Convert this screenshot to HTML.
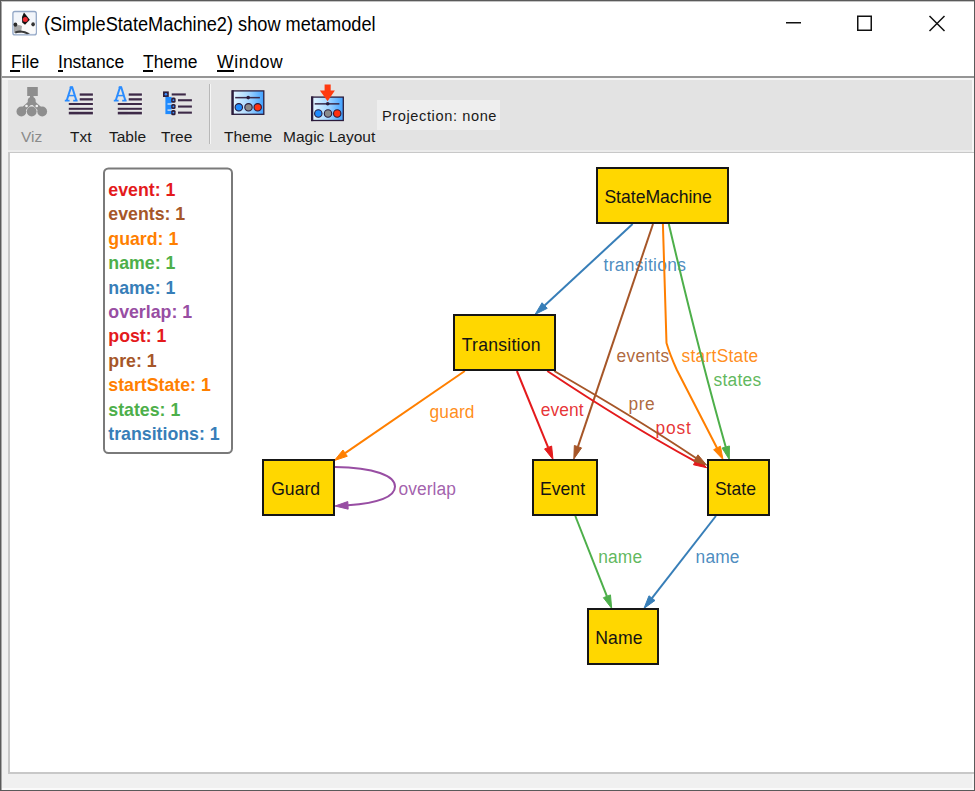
<!DOCTYPE html>
<html><head><meta charset="utf-8">
<style>
*{margin:0;padding:0;box-sizing:border-box}
html,body{width:975px;height:791px;overflow:hidden;background:#fff}
body{position:relative;font-family:"Liberation Sans",sans-serif;color:#000}
.a{position:absolute;white-space:nowrap}
#win{position:absolute;left:0;top:0;width:975px;height:791px;border:1px solid #5a5a5a;background:#fff}
.menu{font-size:17.5px;top:51px;line-height:22px}
.menu u{text-decoration:none}
.tl{font-size:15.5px;top:127px;line-height:20px;color:#1a1a1a}
</style></head><body>
<div id="win"></div>
<!-- title bar -->
<svg class="a" style="left:11px;top:10px" width="28" height="28" viewBox="11 10 28 28">
  <rect x="12.9" y="11.5" width="23.4" height="23.4" rx="2" fill="#f2f5fa" stroke="#93a7c6" stroke-width="1.3"/>
  <path d="M14 24 Q16 21 21 22 L29 22 Q33 22 35.5 24 L35.5 33 L14 33 Z" fill="#fafafa"/>
  <path d="M14 26 Q18 24 22 26 L21 33 L14 33 Z" fill="#a8a8a8"/>
  <path d="M15 31.5 Q22 28.5 30 33.5 L27 34.2 Q21 31 15.5 33.5 Z" fill="#3a3a3a"/>
  <path d="M24 12.6 L29.8 19.8 L25 24.8 L22.2 22.5 L22 17 Z" fill="#121212"/>
  <circle cx="25.3" cy="19.4" r="2.5" fill="#ee2a32"/>
  <ellipse cx="15.4" cy="24.6" rx="1.9" ry="2.2" fill="#2a2a2a"/>
  <ellipse cx="33.1" cy="24.3" rx="1.8" ry="2.1" fill="#333"/>
</svg>
<div class="a" style="left:44px;top:13px;font-size:18.2px;line-height:22px;transform:scaleY(1.08);transform-origin:0 0">(SimpleStateMachine2) show metamodel</div>
<svg class="a" style="left:780px;top:8px" width="180" height="32">
  <rect x="6" y="14" width="15" height="1.5" fill="#111"/>
  <rect x="77.75" y="8.25" width="13.5" height="14" fill="none" stroke="#111" stroke-width="1.5"/>
  <path d="M149.5 8 L164.5 23 M164.5 8 L149.5 23" stroke="#111" stroke-width="1.5"/>
</svg>
<!-- menu bar -->
<div class="a menu" style="left:11px"><u>F</u>ile</div>
<div class="a menu" style="left:58px"><u>I</u>nstance</div>
<div class="a menu" style="left:143px"><u>T</u>heme</div>
<div class="a menu" style="left:217px;letter-spacing:0.7px"><u>W</u>indow</div>
<div class="a" style="left:10px;top:70px;width:10px;height:2px;background:#000"></div>
<div class="a" style="left:58px;top:70px;width:5px;height:2px;background:#000"></div>
<div class="a" style="left:143px;top:70px;width:10px;height:2px;background:#000"></div>
<div class="a" style="left:217px;top:70px;width:17px;height:2px;background:#000"></div>
<div class="a" style="left:1px;top:76px;width:973px;height:2px;background:#959595"></div>
<div class="a" style="left:1px;top:78px;width:973px;height:2px;background:#f7f7f7"></div>
<!-- toolbar -->
<div class="a" style="left:1px;top:80px;width:973px;height:709px;background:#f0f0f0"></div>
<div class="a" style="left:8px;top:80px;width:964px;height:70px;background:#e3e3e3"></div>
<div class="a" style="left:8px;top:150px;width:964px;height:2px;background:#ececec"></div>
<!-- canvas -->
<div class="a" style="left:972px;top:80px;width:2px;height:709px;background:#f6f6f6"></div>
<div class="a" style="left:8px;top:152px;width:966px;height:622px;background:#c8c8c8"></div>
<div class="a" style="left:10px;top:153px;width:964px;height:619px;background:#fff"></div>
<div class="a" style="left:1px;top:788px;width:973px;height:2px;background:#fafafa"></div>


<svg class="a" style="left:8px;top:80px" width="200" height="45" viewBox="8 80 200 45">
  <!-- Viz -->
  <g fill="#8e8e8e">
    <rect x="27.2" y="87" width="10.6" height="9"/>
    <rect x="30" y="95" width="3.5" height="4"/>
    <circle cx="31.7" cy="101" r="4"/>
    <path d="M29 101 L19 110 L24 112 L31.7 104 L39.5 112 L44.5 110 L34.5 101 Z"/>
    <circle cx="21.4" cy="111.5" r="4.9"/>
    <circle cx="31.7" cy="111.5" r="4.9"/>
    <circle cx="42.2" cy="111.5" r="4.9"/>
  </g>
  <circle cx="26.5" cy="106" r="1.3" fill="#f2f2f2"/>
  <circle cx="36.8" cy="106" r="1.3" fill="#f2f2f2"/>
  <!-- Txt -->
  <g id="txtic">
    <rect x="78.5" y="92" width="15.5" height="24" fill="#efefef" opacity="0.35"/>
    <g fill="none" stroke="#2a8cff">
      <path d="M66.8 100.3 L71 87.2 L72.2 87.2 L76.3 100.3" stroke-width="2"/>
      <path d="M68.6 95.6 L74.6 95.6" stroke-width="1.5"/>
      <path d="M64.8 100.6 L69.6 100.6 M73.2 100.6 L77.6 100.6" stroke-width="1.6"/>
      <path d="M69.6 87.3 L72.3 87.3" stroke-width="1.4"/>
    </g>
    <g fill="#3e2a48">
      <rect x="79.7" y="93.4" width="13.2" height="2.3"/>
      <rect x="79.7" y="98.2" width="13.2" height="2.3"/>
      <rect x="68.8" y="103" width="24.1" height="2"/>
      <rect x="68.8" y="107.8" width="24.1" height="2"/>
      <rect x="68.8" y="111.8" width="24.1" height="2.6"/>
    </g>
  </g>
  <use href="#txtic" x="49" y="0"/>
  <!-- Tree -->
  <rect x="163" y="91.4" width="5.8" height="5.6" fill="#2e1f3a"/>
  <circle cx="165.9" cy="94.2" r="1.3" fill="#3a8cff"/>
  <rect x="171.7" y="93.4" width="14.1" height="2.1" fill="#3e2a48"/>
  <rect x="165.4" y="96.9" width="6.3" height="17.2" fill="#1f8bff"/>
  <rect x="167.5" y="103.4" width="4.5" height="1.2" fill="#e8eef6"/>
  <rect x="167.5" y="109.5" width="4.5" height="1.2" fill="#e8eef6"/>
  <g fill="#2e1f3a">
    <rect x="171.2" y="97.6" width="4.4" height="5.2" rx="1.5"/>
    <rect x="171.2" y="103.9" width="4.4" height="5.2" rx="1.5"/>
    <rect x="171.2" y="110" width="4.4" height="5.2" rx="1.5"/>
  </g>
  <g fill="#3e2a48">
    <rect x="178" y="99.2" width="13.9" height="2.1"/>
    <rect x="178" y="105.5" width="13.9" height="2.1"/>
    <rect x="178" y="111.6" width="13.9" height="2.1"/>
  </g>
  <g fill="#3a8cff">
    <circle cx="173.4" cy="100.2" r="0.9"/><circle cx="173.4" cy="106.5" r="0.9"/><circle cx="173.4" cy="112.6" r="0.9"/>
  </g>
</svg>
<svg class="a" style="left:220px;top:80px" width="140" height="45" viewBox="220 80 140 45">
  <defs>
    <linearGradient id="lb" x1="0" y1="0" x2="1" y2="0">
      <stop offset="0" stop-color="#e6f6ff"/><stop offset="0.5" stop-color="#a8d8ff"/><stop offset="1" stop-color="#3fa0ff"/>
    </linearGradient>
  </defs>
  <!-- Theme -->
  <g id="thic">
    <rect x="232.2" y="90.9" width="31.6" height="23.4" fill="url(#lb)" stroke="#2b1c3c" stroke-width="1.3"/>
    <rect x="231.6" y="90.3" width="2.2" height="24.6" fill="#2b1c3c"/>
    <rect x="235.2" y="96.9" width="24.7" height="1.5" fill="#3a2a4a"/>
    <circle cx="248.2" cy="97.6" r="1.8" fill="#2b1c3c"/>
    <circle cx="238.8" cy="107.3" r="3.7" fill="#1f8bff" stroke="#2b1c3c" stroke-width="1.1"/>
    <circle cx="248.5" cy="107.3" r="3.7" fill="#8a8a8a" stroke="#2b1c3c" stroke-width="1.1"/>
    <circle cx="257.7" cy="107.3" r="3.7" fill="#ff3010" stroke="#2b1c3c" stroke-width="1.1"/>
  </g>
  <use href="#thic" x="79.5" y="6.2"/>
  <path d="M324.6 84.4 L330.7 84.4 L330.7 90.6 L334.9 90.6 L327.6 101.2 L319.9 90.6 L324.6 90.6 Z" fill="#ff3a10"/>
</svg>
<div class="a tl" style="left:21px;color:#8a8a8a">Viz</div>
<div class="a tl" style="left:70px">Txt</div>
<div class="a tl" style="left:109px">Table</div>
<div class="a tl" style="left:161px">Tree</div>
<div class="a" style="left:209px;top:84px;width:1px;height:60px;background:#b8b8b8"></div>
<div class="a" style="left:210px;top:84px;width:1px;height:60px;background:#f6f6f6"></div>
<div class="a tl" style="left:224px">Theme</div>
<div class="a tl" style="left:283px">Magic Layout</div>
<div class="a" style="left:377px;top:100px;width:123px;height:30px;background:#eeeeee"></div>
<div class="a" style="left:382px;top:106px;font-size:14.6px;letter-spacing:0.6px;line-height:20px;color:#1a1a1a">Projection: none</div>

<div class="a" style="left:1px;top:1px;width:1px;height:789px;background:#a8a8a8"></div>
<div class="a" style="left:1px;top:1px;width:973px;height:1px;background:#c4c4c4"></div>
<svg id="g" class="a" style="left:0;top:0" width="975" height="791" font-family="Liberation Sans, sans-serif">
<text x="603.6" y="270.6" font-size="17.4" letter-spacing="0.3" fill="#377eb8" fill-opacity="0.9" transform="translate(0 270.6) scale(1 1.08) translate(0 -270.6)">transitions</text>
<text x="616.6" y="362.5" font-size="17.4" letter-spacing="0.25" fill="#a65628" fill-opacity="0.9" transform="translate(0 362.5) scale(1 1.08) translate(0 -362.5)">events</text>
<text x="681.6" y="362.5" font-size="17.4" letter-spacing="0.25" fill="#ff7f00" fill-opacity="0.9" transform="translate(0 362.5) scale(1 1.08) translate(0 -362.5)">startState</text>
<text x="713.6" y="386.5" font-size="17.4" letter-spacing="0.25" fill="#4daf4a" fill-opacity="0.9" transform="translate(0 386.5) scale(1 1.08) translate(0 -386.5)">states</text>
<text x="429.6" y="417.8" font-size="17.4" letter-spacing="0.1" fill="#ff7f00" fill-opacity="0.9" transform="translate(0 417.8) scale(1 1.08) translate(0 -417.8)">guard</text>
<text x="540.8" y="415.8" font-size="17.4" letter-spacing="0.05" fill="#e41a1c" fill-opacity="0.9" transform="translate(0 415.8) scale(1 1.08) translate(0 -415.8)">event</text>
<text x="628.5" y="410" font-size="17.4" letter-spacing="0.5" fill="#a65628" fill-opacity="0.9" transform="translate(0 410) scale(1 1.08) translate(0 -410)">pre</text>
<text x="655.6" y="434.2" font-size="17.4" letter-spacing="0.8" fill="#e41a1c" fill-opacity="0.9" transform="translate(0 434.2) scale(1 1.08) translate(0 -434.2)">post</text>
<text x="398.4" y="494.8" font-size="17.4" letter-spacing="0.1" fill="#984ea3" fill-opacity="0.9" transform="translate(0 494.8) scale(1 1.08) translate(0 -494.8)">overlap</text>
<text x="598.2" y="563" font-size="17.4" letter-spacing="0.15" fill="#4daf4a" fill-opacity="0.9" transform="translate(0 563) scale(1 1.08) translate(0 -563)">name</text>
<text x="695.6" y="563" font-size="17.4" letter-spacing="0.15" fill="#377eb8" fill-opacity="0.9" transform="translate(0 563) scale(1 1.08) translate(0 -563)">name</text>
<path d="M535.10,314.40 L542.05,302.77 L547.22,308.35 Z" fill="#377eb8" stroke="#377eb8" stroke-width="1" stroke-linejoin="miter"/>
<path d="M632.60,224.00 L544.63,305.56" stroke="#377eb8" stroke-width="2.0" fill="none"/>
<path d="M573.80,459.00 L574.35,445.47 L581.55,447.89 Z" fill="#a65628" stroke="#a65628" stroke-width="1" stroke-linejoin="miter"/>
<path d="M653.00,224.00 L577.95,446.68" stroke="#a65628" stroke-width="2.0" fill="none"/>
<path d="M723.00,459.50 L713.64,449.71 L720.39,446.21 Z" fill="#ff7f00" stroke="#ff7f00" stroke-width="1" stroke-linejoin="miter"/>
<path d="M662.9,224 L666.5,343 Q670,355 676.9,370 L 717.01,447.96" stroke="#ff7f00" stroke-width="2.0" fill="none"/>
<path d="M729.30,459.50 L722.10,448.03 L729.41,445.96 Z" fill="#4daf4a" stroke="#4daf4a" stroke-width="1" stroke-linejoin="miter"/>
<path d="M668.80,224.00 Q699.10,353.00 725.75,446.99" stroke="#4daf4a" stroke-width="2.0" fill="none"/>
<path d="M334.40,460.50 L342.97,450.01 L347.27,456.28 Z" fill="#ff7f00" stroke="#ff7f00" stroke-width="1" stroke-linejoin="miter"/>
<path d="M464.80,371.00 L345.12,453.14" stroke="#ff7f00" stroke-width="2.0" fill="none"/>
<path d="M553.00,459.50 L544.57,448.90 L551.61,446.03 Z" fill="#e41a1c" stroke="#e41a1c" stroke-width="1" stroke-linejoin="miter"/>
<path d="M516.90,371.00 L548.09,447.46" stroke="#e41a1c" stroke-width="2.0" fill="none"/>
<path d="M706.70,467.70 L693.47,464.78 L697.13,458.12 Z" fill="#e41a1c" stroke="#e41a1c" stroke-width="1" stroke-linejoin="miter"/>
<path d="M547.30,371.00 Q626.30,423.60 695.30,461.45" stroke="#e41a1c" stroke-width="2.0" fill="none"/>
<path d="M706.70,465.20 L693.78,461.15 L697.99,454.83 Z" fill="#a65628" stroke="#a65628" stroke-width="1" stroke-linejoin="miter"/>
<path d="M554.20,371.00 Q635.90,418.00 695.88,457.99" stroke="#a65628" stroke-width="2.0" fill="none"/>
<path d="M335.00,506.00 L347.79,501.56 L348.17,509.15 Z" fill="#984ea3" stroke="#984ea3" stroke-width="1" stroke-linejoin="miter"/>
<path d="M335,467 C375,467.5 395,476 395,486.5 C395,497 378,503  347.98,505.35" stroke="#984ea3" stroke-width="2.0" fill="none"/>
<path d="M611.70,608.40 L603.40,597.70 L610.47,594.91 Z" fill="#4daf4a" stroke="#4daf4a" stroke-width="1" stroke-linejoin="miter"/>
<path d="M575.30,516.00 L606.94,596.30" stroke="#4daf4a" stroke-width="2.0" fill="none"/>
<path d="M644.00,608.40 L648.98,595.81 L654.98,600.47 Z" fill="#377eb8" stroke="#377eb8" stroke-width="1" stroke-linejoin="miter"/>
<path d="M715.90,516.00 L651.98,598.14" stroke="#377eb8" stroke-width="2.0" fill="none"/>
<rect x="597" y="168" width="131" height="55" fill="#ffd700" stroke="#161616" stroke-width="2"/>
<text x="604.4" y="203" font-size="17.6" letter-spacing="0" transform="translate(0 203) scale(1 1.08) translate(0 -203)" fill="#141414">StateMachine</text>
<rect x="454" y="315" width="101" height="55" fill="#ffd700" stroke="#161616" stroke-width="2"/>
<text x="461.7" y="350.6" font-size="17.6" letter-spacing="0.25" transform="translate(0 350.6) scale(1 1.08) translate(0 -350.6)" fill="#141414">Transition</text>
<rect x="263" y="460" width="71" height="55" fill="#ffd700" stroke="#161616" stroke-width="2"/>
<text x="271.2" y="495.2" font-size="17.6" letter-spacing="0" transform="translate(0 495.2) scale(1 1.08) translate(0 -495.2)" fill="#141414">Guard</text>
<rect x="533" y="460" width="64" height="55" fill="#ffd700" stroke="#161616" stroke-width="2"/>
<text x="539.9" y="495.2" font-size="17.6" letter-spacing="0.05" transform="translate(0 495.2) scale(1 1.08) translate(0 -495.2)" fill="#141414">Event</text>
<rect x="708" y="460" width="61" height="55" fill="#ffd700" stroke="#161616" stroke-width="2"/>
<text x="714.9" y="494.8" font-size="17.6" letter-spacing="0" transform="translate(0 494.8) scale(1 1.08) translate(0 -494.8)" fill="#141414">State</text>
<rect x="588" y="609" width="70" height="55" fill="#ffd700" stroke="#161616" stroke-width="2"/>
<text x="595.2" y="644" font-size="17.6" letter-spacing="0.15" transform="translate(0 644) scale(1 1.08) translate(0 -644)" fill="#141414">Name</text>
<rect x="104" y="168.5" width="128" height="284.5" rx="4.5" fill="#fff" stroke="#7a7a7a" stroke-width="2"/>
<text x="108.3" y="195.90" font-size="17.75" font-weight="bold" fill="#e41a1c" transform="translate(0 195.90) scale(1 1.05) translate(0 -195.90)">event: 1</text>
<text x="108.3" y="220.32" font-size="17.75" font-weight="bold" fill="#a65628" transform="translate(0 220.32) scale(1 1.05) translate(0 -220.32)">events: 1</text>
<text x="108.3" y="244.74" font-size="17.75" font-weight="bold" fill="#ff7f00" transform="translate(0 244.74) scale(1 1.05) translate(0 -244.74)">guard: 1</text>
<text x="108.3" y="269.16" font-size="17.75" font-weight="bold" fill="#4daf4a" transform="translate(0 269.16) scale(1 1.05) translate(0 -269.16)">name: 1</text>
<text x="108.3" y="293.58" font-size="17.75" font-weight="bold" fill="#377eb8" transform="translate(0 293.58) scale(1 1.05) translate(0 -293.58)">name: 1</text>
<text x="108.3" y="318.00" font-size="17.75" font-weight="bold" fill="#984ea3" transform="translate(0 318.00) scale(1 1.05) translate(0 -318.00)">overlap: 1</text>
<text x="108.3" y="342.42" font-size="17.75" font-weight="bold" fill="#e41a1c" transform="translate(0 342.42) scale(1 1.05) translate(0 -342.42)">post: 1</text>
<text x="108.3" y="366.84" font-size="17.75" font-weight="bold" fill="#a65628" transform="translate(0 366.84) scale(1 1.05) translate(0 -366.84)">pre: 1</text>
<text x="108.3" y="391.26" font-size="17.75" font-weight="bold" fill="#ff7f00" transform="translate(0 391.26) scale(1 1.05) translate(0 -391.26)">startState: 1</text>
<text x="108.3" y="415.68" font-size="17.75" font-weight="bold" fill="#4daf4a" transform="translate(0 415.68) scale(1 1.05) translate(0 -415.68)">states: 1</text>
<text x="108.3" y="440.10" font-size="17.75" font-weight="bold" fill="#377eb8" transform="translate(0 440.10) scale(1 1.05) translate(0 -440.10)">transitions: 1</text>
</svg>
</body></html>
